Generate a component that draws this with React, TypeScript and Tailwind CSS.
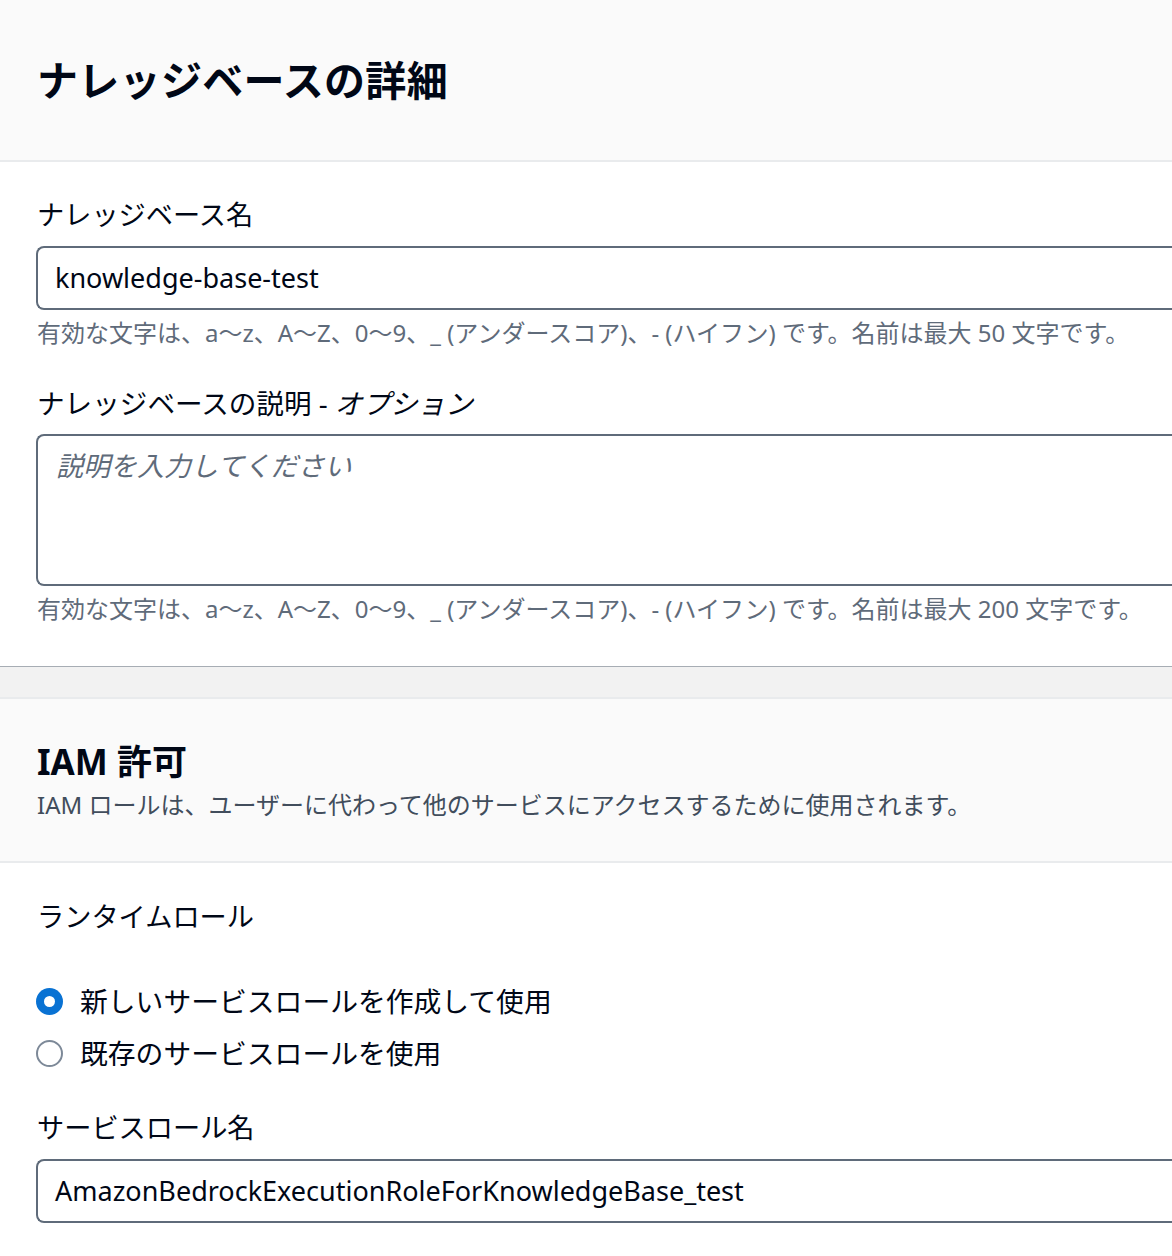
import React from "react";

const FONT = { fontFamily: '"Noto Sans", "Noto Sans CJK JP", sans-serif' };

function Radio({ checked, label }: { checked: boolean; label: string }) {
  return (
    <div className="flex items-center h-[44px]">
      {checked ? (
        <span className="w-[27px] h-[27px] rounded-full bg-[#0972d3] flex items-center justify-center shrink-0">
          <span className="w-[11px] h-[11px] rounded-full bg-white" />
        </span>
      ) : (
        <span className="w-[27px] h-[27px] rounded-full border-2 border-[#7d8998] bg-white shrink-0" />
      )}
      <span className="ml-[17px] text-[27.8px] leading-[36px] text-[#000716]">{label}</span>
    </div>
  );
}

export default function App() {
  return (
    <div className="w-[1172px] min-h-[1256px] bg-white overflow-hidden text-[#000716]" style={FONT}>
      {/* Panel 1 */}
      <div className="bg-white border-b border-[#a7adb4] shadow-[0_1px_1px_rgba(0,28,36,0.15)]">
        <div className="h-[162px] bg-[#fafafa] border-b-2 border-[#e9ebed] px-[37px] flex items-center">
          <h2 className="text-[41px] leading-[48px] font-bold tracking-[0.3px]">ナレッジベースの詳細</h2>
        </div>
        <div className="pl-[36px] pt-[35px] pb-[41px]">
          <div className="pl-[1px] text-[27.2px] leading-[36px]">ナレッジベース名</div>
          <div className="mt-[13px] h-[64px] border-2 border-[#5f6b7a] rounded-l-[8px] border-r-0 flex items-center pl-[17px]">
            <span className="text-[27px] text-[#000716]">knowledge-base-test</span>
          </div>
          <div className="mt-[7px] pl-[1px] text-[24px] leading-[32px] text-[#5f6b7a] whitespace-nowrap">
            有効な文字は、a〜z、A〜Z、0〜9、_ (アンダースコア)、- (ハイフン) です。名前は最大 50 文字です。
          </div>
          <div className="mt-[36px] pl-[1px] text-[27.6px] leading-[36px]">
            ナレッジベースの説明 - <i>オプション</i>
          </div>
          <div className="mt-[13px] h-[152px] border-2 border-[#5f6b7a] rounded-l-[8px] border-r-0 pl-[18px] pt-[12px]">
            <span className="text-[27px] leading-[36px] italic text-[#5f6b7a]">説明を入力してください</span>
          </div>
          <div className="mt-[7px] pl-[1px] text-[24px] leading-[32px] text-[#5f6b7a] whitespace-nowrap">
            有効な文字は、a〜z、A〜Z、0〜9、_ (アンダースコア)、- (ハイフン) です。名前は最大 200 文字です。
          </div>
        </div>
      </div>

      {/* gap */}
      <div className="h-[30px] bg-[#f2f2f2]" />

      {/* Panel 2 */}
      <div className="bg-white border-t-2 border-[#e9ebed]">
        <div className="h-[164px] bg-[#fafafa] border-b-2 border-[#e9ebed] px-[37px] flex flex-col justify-center">
          <h2 className="text-[35px] leading-[46px] font-bold">IAM 許可</h2>
          <div className="text-[24px] leading-[32px] text-[#414d5c] mt-[4px]">
            IAM ロールは、ユーザーに代わって他のサービスにアクセスするために使用されます。
          </div>
        </div>
        <div className="pl-[36px] pt-[36px] pb-[40px]">
          <div className="pl-[1px] text-[27.2px] leading-[36px]">ランタイムロール</div>
          <div className="mt-[44px] flex flex-col gap-[8px]">
            <Radio checked label="新しいサービスロールを作成して使用" />
            <Radio checked={false} label="既存のサービスロールを使用" />
          </div>
          <div className="mt-[35px] pl-[1px] text-[27.2px] leading-[36px]">サービスロール名</div>
          <div className="mt-[13px] h-[64px] border-2 border-[#5f6b7a] rounded-l-[8px] border-r-0 flex items-center pl-[17px]">
            <span className="text-[27px] text-[#000716]">AmazonBedrockExecutionRoleForKnowledgeBase_test</span>
          </div>
        </div>
      </div>
    </div>
  );
}
